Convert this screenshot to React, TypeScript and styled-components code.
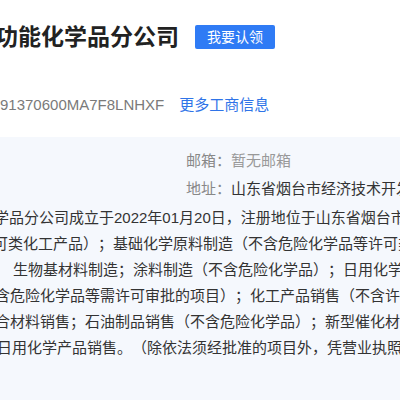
import styled, { createGlobalStyle } from "styled-components";

const GlobalStyle = createGlobalStyle`
  html, body {
    margin: 0;
    padding: 0;
    background: #ffffff;
  }
  body {
    font-family: "Liberation Sans", "Noto Sans CJK SC", sans-serif;
    color: #333333;
    text-spacing-trim: space-all;
  }
`;

// the paragraph is cut by the left edge of the view, so each line keeps its own offset
const scopeLines: { text: string; shift: number }[] = [
  { text: "学品分公司成立于2022年01月20日，注册地位于山东省烟台市经济技术开发区", shift: -6 },
  { text: "可类化工产品）；基础化学原料制造（不含危险化学品等许可类化学品的制造）", shift: -7 },
  { text: "生物基材料制造；涂料制造（不含危险化学品）；日用化学产品制造", shift: 13 },
  { text: "含危险化学品等需许可审批的项目）；化工产品销售（不含许可类化工产品）", shift: -5 },
  { text: "合材料销售；石油制品销售（不含危险化学品）；新型催化材料及助剂销售", shift: -5 },
  { text: "日用化学产品销售。（除依法须经批准的项目外，凭营业执照依法自主开展经营活动）", shift: -3 },
];

export default function App() {
  return (
    <>
      <GlobalStyle />
      <Page>
        <Header>
          <Title>功能化学品分公司</Title>
          <ClaimButton>我要认领</ClaimButton>
        </Header>
        <CodeRow>
          <Code>91370600MA7F8LNHXF</Code>
          <MoreLink>更多工商信息</MoreLink>
        </CodeRow>
        <Panel>
          <InfoRow>
            <Label>邮箱：</Label>
            <Value $muted>暂无邮箱</Value>
          </InfoRow>
          <InfoRow>
            <Label>地址：</Label>
            <Value>山东省烟台市经济技术开发区长江路</Value>
          </InfoRow>
          <Scope>
            {scopeLines.map((line, i) => (
              <ScopeLine key={i} $shift={line.shift}>
                {line.text}
              </ScopeLine>
            ))}
          </Scope>
        </Panel>
      </Page>
    </>
  );
}

const Page = styled.div`
  width: 400px;
  height: 400px;
  overflow: hidden;
  display: flex;
  flex-direction: column;
`;

const Header = styled.div`
  display: flex;
  align-items: center;
  gap: 16px;
  margin-top: 21px;
  margin-left: -5px;
`;

const Title = styled.h1`
  margin: 0;
  font-size: 23px;
  line-height: 32px;
  font-weight: 700;
  color: #222222;
  white-space: nowrap;
`;

const ClaimButton = styled.button`
  height: 24px;
  padding: 0 12px;
  border: none;
  border-radius: 2px;
  background: #2f7bf5;
  color: #ffffff;
  font-family: inherit;
  font-size: 14px;
  line-height: 24px;
  cursor: pointer;
`;

const CodeRow = styled.div`
  display: flex;
  align-items: center;
  gap: 15px;
  margin-top: 42px;
  height: 20px;
  font-size: 15px;
  line-height: 20px;
  white-space: nowrap;
`;

const Code = styled.span`
  color: #7a7a7a;
`;

const MoreLink = styled.a`
  color: #2f74e8;
  cursor: pointer;
`;

const Panel = styled.div`
  flex: 1;
  margin-top: 22px;
  padding-top: 10px;
  background: #f5f8fd;
  font-size: 15px;
`;

const InfoRow = styled.div`
  display: flex;
  line-height: 28px;
  white-space: nowrap;
`;

const Label = styled.span`
  flex: 0 0 231px;
  text-align: right;
  color: #888888;
`;

const Value = styled.span<{ $muted?: boolean }>`
  color: ${(p) => (p.$muted ? "#999999" : "#333333")};
`;

const Scope = styled.div`
  margin-top: 2px;
  line-height: 26px;
  color: #333333;
`;

const ScopeLine = styled.div<{ $shift: number }>`
  white-space: nowrap;
  margin-left: ${(p) => p.$shift}px;
`;
